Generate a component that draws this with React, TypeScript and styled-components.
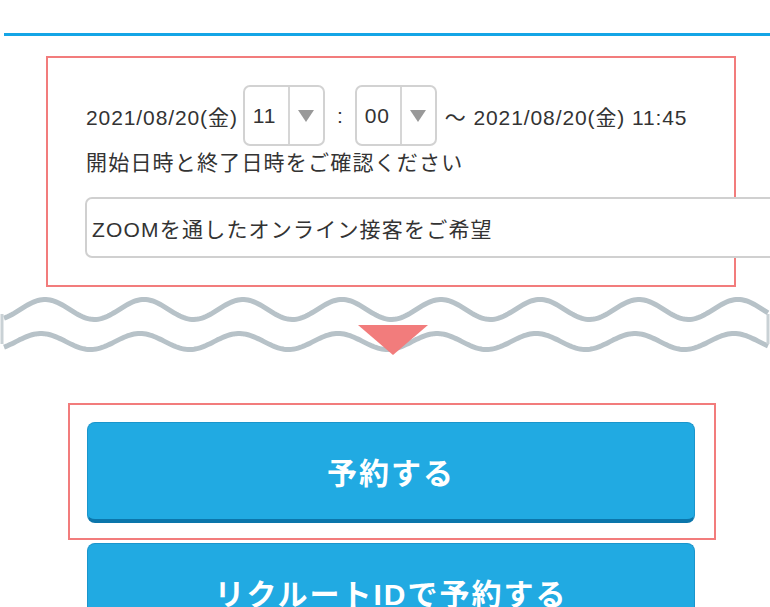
import React from "react";
import styled, { createGlobalStyle } from "styled-components";

const GlobalStyle = createGlobalStyle`
  html, body {
    margin: 0;
    padding: 0;
    background: #fff;
    width: 770px;
    height: 607px;
    overflow: hidden;
  }
  body {
    font-family: "Liberation Sans", "Noto Sans CJK JP", sans-serif;
    color: #333;
  }
`;

const Page = styled.div`
  display: flex;
  flex-direction: column;
  width: 770px;

  & > * {
    flex-shrink: 0;
  }
`;

const TopRule = styled.div`
  margin: 33px 0 0 4px;
  height: 3px;
  background: #14a5e6;
`;

const Highlight = styled.section`
  box-sizing: border-box;
  margin: 20px 0 0 46px;
  width: 690px;
  height: 231px;
  border: 2px solid #f27c7c;
  padding: 27px 0 0 38px;
`;

const TimeRow = styled.div`
  display: flex;
  align-items: center;
  height: 61px;
  font-size: 21px;
  white-space: nowrap;
`;

const DateText = styled.span<{ gap?: number }>`
  letter-spacing: 0.9px;
  margin-right: ${({ gap = 0 }) => gap}px;
`;

const SelectBox = styled.div`
  box-sizing: border-box;
  display: flex;
  width: 82px;
  height: 61px;
  border: 2px solid #d2d2d2;
  border-radius: 7px;
`;

const SelectValue = styled.span`
  flex: 1;
  display: flex;
  align-items: center;
  padding-left: 8px;
  font-size: 21px;
  letter-spacing: 0.8px;
  border-right: 2px solid #d6d6d6;
`;

const SelectArrow = styled.span`
  width: 33px;
  display: flex;
  align-items: center;
  justify-content: center;
`;

const Colon = styled.span`
  width: 30px;
  text-align: center;
`;

const Note = styled.p`
  margin: 2px 0 0 0;
  font-size: 21px;
  line-height: 30px;
  letter-spacing: 1.2px;
`;

const TextField = styled.div`
  box-sizing: border-box;
  margin: 19px 0 0 -1px;
  width: 700px;
  height: 61px;
  border: 2px solid #d0d0d0;
  border-radius: 7px;
  display: flex;
  align-items: center;
  padding-left: 5px;
  font-size: 21px;
  letter-spacing: 1.2px;
  white-space: nowrap;
  background: #fff;
`;

const Separator = styled.svg`
  display: block;
  margin-top: 3px;
`;

const ButtonHighlight = styled.div`
  box-sizing: border-box;
  margin: 43px 0 0 68px;
  width: 648px;
  border: 2px solid #f27c7c;
  padding: 17px 19px 15px 17px;
`;

const ActionButton = styled.button<{ offset?: number }>`
  box-sizing: border-box;
  width: 608px;
  height: 101px;
  margin: ${({ offset = 0 }) => `${offset}px 0 0 ${offset ? 87 : 0}px`};
  border: 1px solid #1a95cc;
  border-bottom: 4px solid #0b76ab;
  border-radius: 8px;
  background: #21aae2;
  color: #fff;
  font-family: "Liberation Sans", "Noto Sans CJK JP", sans-serif;
  font-size: 30px;
  font-weight: bold;
  letter-spacing: 2px;
  padding: 0;
  cursor: pointer;
`;

const Arrow = () => (
  <svg width="16" height="12" viewBox="0 0 16 12">
    <polygon points="0,0 16,0 8,12" fill="#999" />
  </svg>
);

const Select: React.FC<{ value: string }> = ({ value }) => (
  <SelectBox>
    <SelectValue>{value}</SelectValue>
    <SelectArrow>
      <Arrow />
    </SelectArrow>
  </SelectBox>
);

// sine wave path for the torn-paper separator
const wave = (center: number, amp: number, peakX: number) => {
  const pts: string[] = [];
  for (let x = 4; x <= 768; x += 2) {
    const y = center - amp * Math.cos((2 * Math.PI * (x - peakX)) / 99);
    pts.push(`${x},${y.toFixed(2)}`);
  }
  return "M" + pts.join(" L");
};

const App: React.FC = () => (
  <Page>
    <GlobalStyle />
    <TopRule />
    <Highlight>
      <TimeRow>
        <DateText gap={5}>2021/08/20(金)</DateText>
        <Select value="11" />
        <Colon>:</Colon>
        <Select value="00" />
        <DateText style={{ marginLeft: 8 }}>〜 2021/08/20(金) 11:45</DateText>
      </TimeRow>
      <Note>開始日時と終了日時をご確認ください</Note>
      <TextField>ZOOMを通したオンライン接客をご希望</TextField>
    </Highlight>
    <Separator width="770" height="70" viewBox="0 0 770 70">
      <path d={wave(19.5, 10, 45)} fill="none" stroke="#b7c2c8" strokeWidth="5" />
      <path d={wave(51.5, 8, 41)} fill="none" stroke="#b7c2c8" strokeWidth="5" />
      <line x1="2" y1="24" x2="2" y2="54" stroke="#c9d1d5" strokeWidth="3" />
      <line x1="768" y1="24" x2="768" y2="54" stroke="#c9d1d5" strokeWidth="3" />
      <polygon points="358,35 428,35 393,65" fill="#f27c7c" />
    </Separator>
    <ButtonHighlight>
      <ActionButton>予約する</ActionButton>
    </ButtonHighlight>
    <ActionButton offset={3}>リクルートIDで予約する</ActionButton>
  </Page>
);

export default App;
